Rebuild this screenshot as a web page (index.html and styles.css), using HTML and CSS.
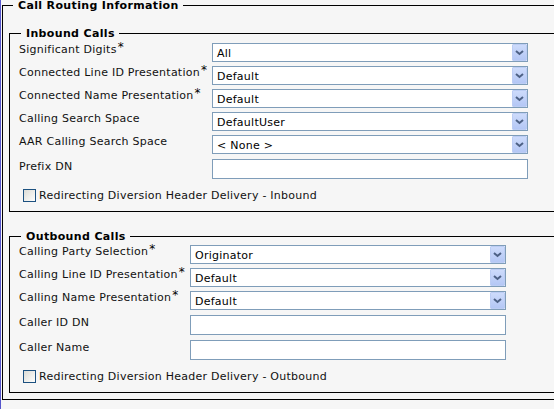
FILE: index.html
```html
<!DOCTYPE html>
<html lang="en">
<head>
<meta charset="utf-8">
<title>Call Routing Information</title>
<link rel="stylesheet" href="styles.css">
</head>
<body>
<div class="frame">
  <fieldset class="group">
    <legend class="group-title">Call Routing Information</legend>

    <fieldset class="section section-inbound">
      <legend class="section-title">Inbound Calls</legend>
      <div class="form-grid form-grid-inbound">
        <span class="field-label">Significant Digits<span class="req">*</span></span>
        <div class="select"><span class="select-value">All</span><span class="select-btn"><svg width="15" height="17" viewBox="0 0 15 17"><polyline points="4,7 7.5,10 11,7" fill="none" stroke="#4d6185" stroke-width="2"/></svg></span></div>

        <span class="field-label">Connected Line ID Presentation<span class="req">*</span></span>
        <div class="select"><span class="select-value">Default</span><span class="select-btn"><svg width="15" height="17" viewBox="0 0 15 17"><polyline points="4,7 7.5,10 11,7" fill="none" stroke="#4d6185" stroke-width="2"/></svg></span></div>

        <span class="field-label">Connected Name Presentation<span class="req">*</span></span>
        <div class="select"><span class="select-value">Default</span><span class="select-btn"><svg width="15" height="17" viewBox="0 0 15 17"><polyline points="4,7 7.5,10 11,7" fill="none" stroke="#4d6185" stroke-width="2"/></svg></span></div>

        <span class="field-label">Calling Search Space</span>
        <div class="select"><span class="select-value">DefaultUser</span><span class="select-btn"><svg width="15" height="17" viewBox="0 0 15 17"><polyline points="4,7 7.5,10 11,7" fill="none" stroke="#4d6185" stroke-width="2"/></svg></span></div>

        <span class="field-label">AAR Calling Search Space</span>
        <div class="select"><span class="select-value">&lt; None &gt;</span><span class="select-btn"><svg width="15" height="17" viewBox="0 0 15 17"><polyline points="4,7 7.5,10 11,7" fill="none" stroke="#4d6185" stroke-width="2"/></svg></span></div>

        <span class="field-label field-label-input">Prefix DN</span>
        <div class="text-input"></div>
      </div>
      <div class="check-row">
        <span class="check-box"></span>
        <span class="check-text">Redirecting Diversion Header Delivery - Inbound</span>
      </div>
    </fieldset>

    <fieldset class="section section-outbound">
      <legend class="section-title">Outbound Calls</legend>
      <div class="form-grid form-grid-outbound">
        <span class="field-label">Calling Party Selection<span class="req">*</span></span>
        <div class="select"><span class="select-value">Originator</span><span class="select-btn"><svg width="15" height="17" viewBox="0 0 15 17"><polyline points="4,7 7.5,10 11,7" fill="none" stroke="#4d6185" stroke-width="2"/></svg></span></div>

        <span class="field-label">Calling Line ID Presentation<span class="req">*</span></span>
        <div class="select"><span class="select-value">Default</span><span class="select-btn"><svg width="15" height="17" viewBox="0 0 15 17"><polyline points="4,7 7.5,10 11,7" fill="none" stroke="#4d6185" stroke-width="2"/></svg></span></div>

        <span class="field-label">Calling Name Presentation<span class="req">*</span></span>
        <div class="select"><span class="select-value">Default</span><span class="select-btn"><svg width="15" height="17" viewBox="0 0 15 17"><polyline points="4,7 7.5,10 11,7" fill="none" stroke="#4d6185" stroke-width="2"/></svg></span></div>

        <span class="field-label field-label-input">Caller ID DN</span>
        <div class="text-input"></div>

        <span class="field-label field-label-input">Caller Name</span>
        <div class="text-input"></div>
      </div>
      <div class="check-row">
        <span class="check-box"></span>
        <span class="check-text">Redirecting Diversion Header Delivery - Outbound</span>
      </div>
    </fieldset>
  </fieldset>
</div>
</body>
</html>
```

FILE: styles.css
```css
html, body {
  margin: 0;
  padding: 0;
  overflow: hidden;
  background: #f6f6f6;
}

body {
  font-family: "DejaVu Sans", Verdana, sans-serif;
  font-size: 11px;
  letter-spacing: 0.25px;
  color: #111;
  height: 409px;
}

.frame {
  border-left: 1px solid #5656cc;
  padding-left: 1px;
  height: 409px;
  box-sizing: border-box;
}

.group {
  margin: 0;
  width: 640px;
  border: 1px solid #000;
  padding: 16px 0 6px 6px;
}

.group-title {
  font-weight: bold;
  font-size: 11px;
  line-height: 11px;
  letter-spacing: 0.35px;
  color: #000;
  margin-left: 4px;
  padding: 0 4px 0 5px;
}

.section {
  margin: 0;
  border: 1px solid #000;
  padding: 3px 0 9px 9px;
}

.section-outbound {
  margin-top: 18px;
  padding-top: 2px;
}

.section-title {
  font-weight: bold;
  font-size: 11px;
  line-height: 13px;
  letter-spacing: 0.35px;
  color: #000;
  margin-left: 2px;
  padding: 0 4px 0 5px;
}

.form-grid {
  display: grid;
  row-gap: 4px;
  align-items: start;
}

.form-grid-inbound {
  grid-template-columns: 193px 316px;
}

.form-grid-outbound {
  grid-template-columns: 171px 316px;
}

.field-label {
  line-height: 14px;
  white-space: nowrap;
}

.field-label-input {
  margin-top: 1px;
  padding-top: 1px;
}

.req {
  font-size: 12px;
  line-height: 0;
  vertical-align: 2px;
  margin-left: 1px;
  color: #000;
}

.select {
  box-sizing: border-box;
  height: 19px;
  border: 1px solid #7f9db9;
  background: #fff;
  display: flex;
  align-items: center;
  padding-left: 4px;
}

.select-value {
  flex: 1;
  color: #000;
  line-height: 17px;
  padding-top: 1px;
  white-space: nowrap;
}

.select-btn {
  width: 15px;
  height: 17px;
  box-sizing: border-box;
  border: 1px solid #bccdf4;
  border-radius: 1px;
  background: linear-gradient(#cddbfb, #b4c7f5);
  display: flex;
}

.select-btn svg {
  display: block;
  margin: -1px;
}

.text-input {
  box-sizing: border-box;
  height: 20px;
  margin-top: 1px;
  border: 1px solid #7f9db9;
  background: #fff;
}

.check-row {
  display: flex;
  align-items: center;
  margin-top: 10px;
  margin-left: 4px;
  height: 13px;
}

.check-box {
  box-sizing: border-box;
  width: 13px;
  height: 13px;
  border: 1px solid #1c5180;
  background: linear-gradient(135deg, #dcdcd6, #f4f4f1 70%, #fff);
  margin-right: 3px;
}

.check-text {
  line-height: 13px;
  white-space: nowrap;
}
```
